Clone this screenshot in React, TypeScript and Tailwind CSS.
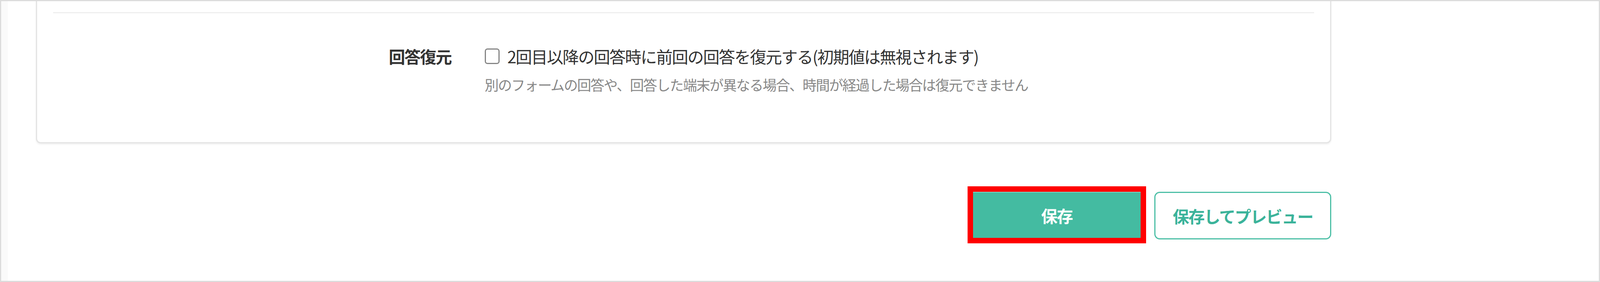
import React from 'react';

const FONT = "font-['Noto_Sans_CJK_JP','Noto_Sans',sans-serif]";

const RestoreRow = () => {
  return (
    <div className="mt-[78px] flex items-start">
      <div className="w-[31.57%] shrink-0 text-right text-[42px] leading-[63px] font-bold tracking-[-2px] text-[#333333]">回答復元</div>
      <div className="ml-[2.65%] flex flex-col">
        <label className="flex items-center h-[63px]">
          <span className="w-[38px] h-[40px] shrink-0 rounded-[7px] border-[3px] border-[#858585] bg-white" />
          <span className="ml-[20px] text-[42px] leading-[63px] tracking-[-2px] text-[#333333] whitespace-nowrap">
            2回目以降の回答時に前回の回答を復元する(初期値は無視されます)
          </span>
        </label>
        <p className="mt-[14px] text-[36px] leading-[55px] tracking-[-2px] text-[#888888] whitespace-nowrap">
          別のフォームの回答や、回答した端末が異なる場合、時間が経過した場合は復元できません
        </p>
      </div>
    </div>
  );
};

const App = () => {
  return (
    <div className={`${FONT} w-full h-[722px] overflow-hidden bg-white border-[3px] border-[#dcdcdc] flex`}>
      <div className="w-[17px] shrink-0 bg-[#fafafa]" />
      <div className="flex-1 pl-[1.75%]">
        <div className="w-[82.89%] -mt-[23px] flex flex-col">
          <section className="rounded-[12px] border-[3px] border-[#e4e4e4] bg-white px-[1.26%] pt-[48px] pb-[120px] shadow-[0_3px_4px_rgba(0,0,0,0.06)]">
            <div className="h-[3px] bg-[#efefef]" />
            <RestoreRow />
          </section>
          <div className="mt-[124px] flex items-start justify-end gap-[1.06%]">
            <button className="w-[12.94%] h-[118px] bg-[#44bba1] border-t-2 border-[#7fd3c1] text-white text-[42px] font-bold tracking-[-2px] outline-[14px] outline-solid outline-[#ff0000]">
              保存
            </button>
            <button className="w-[13.67%] h-[122px] rounded-[14px] border-[3px] border-[#4cbfa6] bg-white text-[#3bb39a] text-[42px] font-bold tracking-[-2px]">
              保存してプレビュー
            </button>
          </div>
        </div>
      </div>
    </div>
  );
};

export default App;
